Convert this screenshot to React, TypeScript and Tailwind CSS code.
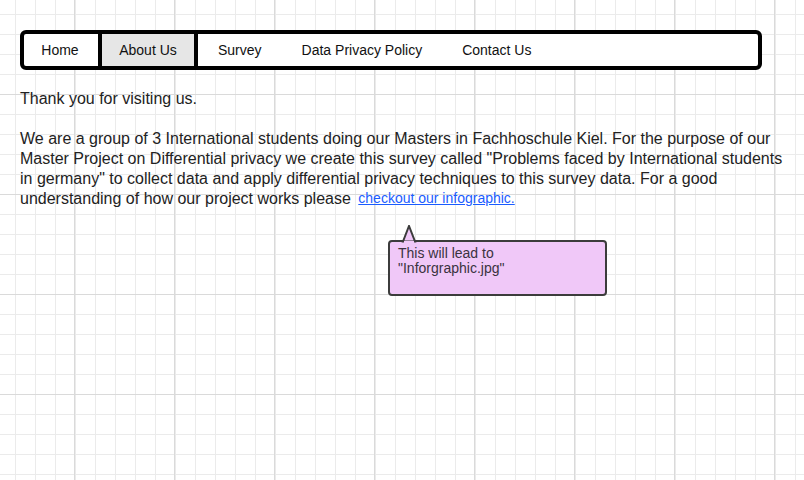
import React from "react";

export default function App() {
  return (
    <div
      className="relative w-full h-[480px] overflow-hidden bg-white bg-[linear-gradient(to_right,#dadada_1px,transparent_1px),linear-gradient(to_bottom,#dadada_1px,transparent_1px),linear-gradient(to_right,#ebebeb_1px,transparent_1px),linear-gradient(to_bottom,#ebebeb_1px,transparent_1px)] bg-[size:100px_100px,100px_100px,20px_20px,20px_20px] bg-[position:74px_94px,74px_94px,15px_14px,15px_14px]"
      style={{ fontFamily: '"Liberation Sans", Arial, sans-serif' }}
    >
      <div className="pt-[30px] pl-[20px]">
        <nav className="flex h-[40px] w-[742px] items-stretch rounded-[6px] border-4 border-black bg-white text-[14px] text-[#111]">
          <div className="flex w-[78px] items-center justify-center border-r-4 border-black pr-[2px]">Home</div>
          <div className="flex w-[96px] items-center justify-center border-r-4 border-black bg-[#e6e6e6]">About Us</div>
          <div className="flex items-center px-5">Survey</div>
          <div className="flex items-center px-5">Data Privacy Policy</div>
          <div className="flex items-center px-5">Contact Us</div>
        </nav>
        <div className="mt-[19px] w-[764px] text-[16px] leading-[20px] text-[#222]">
          <p>Thank you for visiting us.</p>
          <p className="mt-[20px]">
            We are a group of 3 International students doing our Masters in Fachhoschule Kiel. For the purpose of our
            Master Project on Differential privacy we create this survey called "Problems faced by International students
            in germany" to collect data and apply differential privacy techniques to this survey data. For a good
            understanding of how our project works please{" "}
            <a className="relative top-[-1px] ml-[3px] text-[14px] leading-[16px] text-[#1a5cff] underline" href="#">
              checkout our infographic.
            </a>
          </p>
        </div>
      </div>

      <div className="absolute left-[388px] top-[240px] h-[56px] w-[219px] rounded-[4px] border-2 border-[#3c3c3c] bg-[#f0c8f8] px-[8px] pt-[4px] text-[14px] leading-[15px] text-[#3a3340]">
        <svg
          className="absolute left-[11px] top-[-17px]"
          width="16"
          height="19"
          viewBox="0 0 16 19"
        >
          <polygon points="2,16.5 8,1 14,16.5" fill="#f0c8f8" stroke="#3c3c3c" strokeWidth="2" strokeLinejoin="miter" />
          <rect x="3" y="16" width="10" height="3" fill="#f0c8f8" />
        </svg>
        <div className="relative">This will lead to</div>
        <div className="relative">"Inforgraphic.jpg"</div>
      </div>
    </div>
  );
}
